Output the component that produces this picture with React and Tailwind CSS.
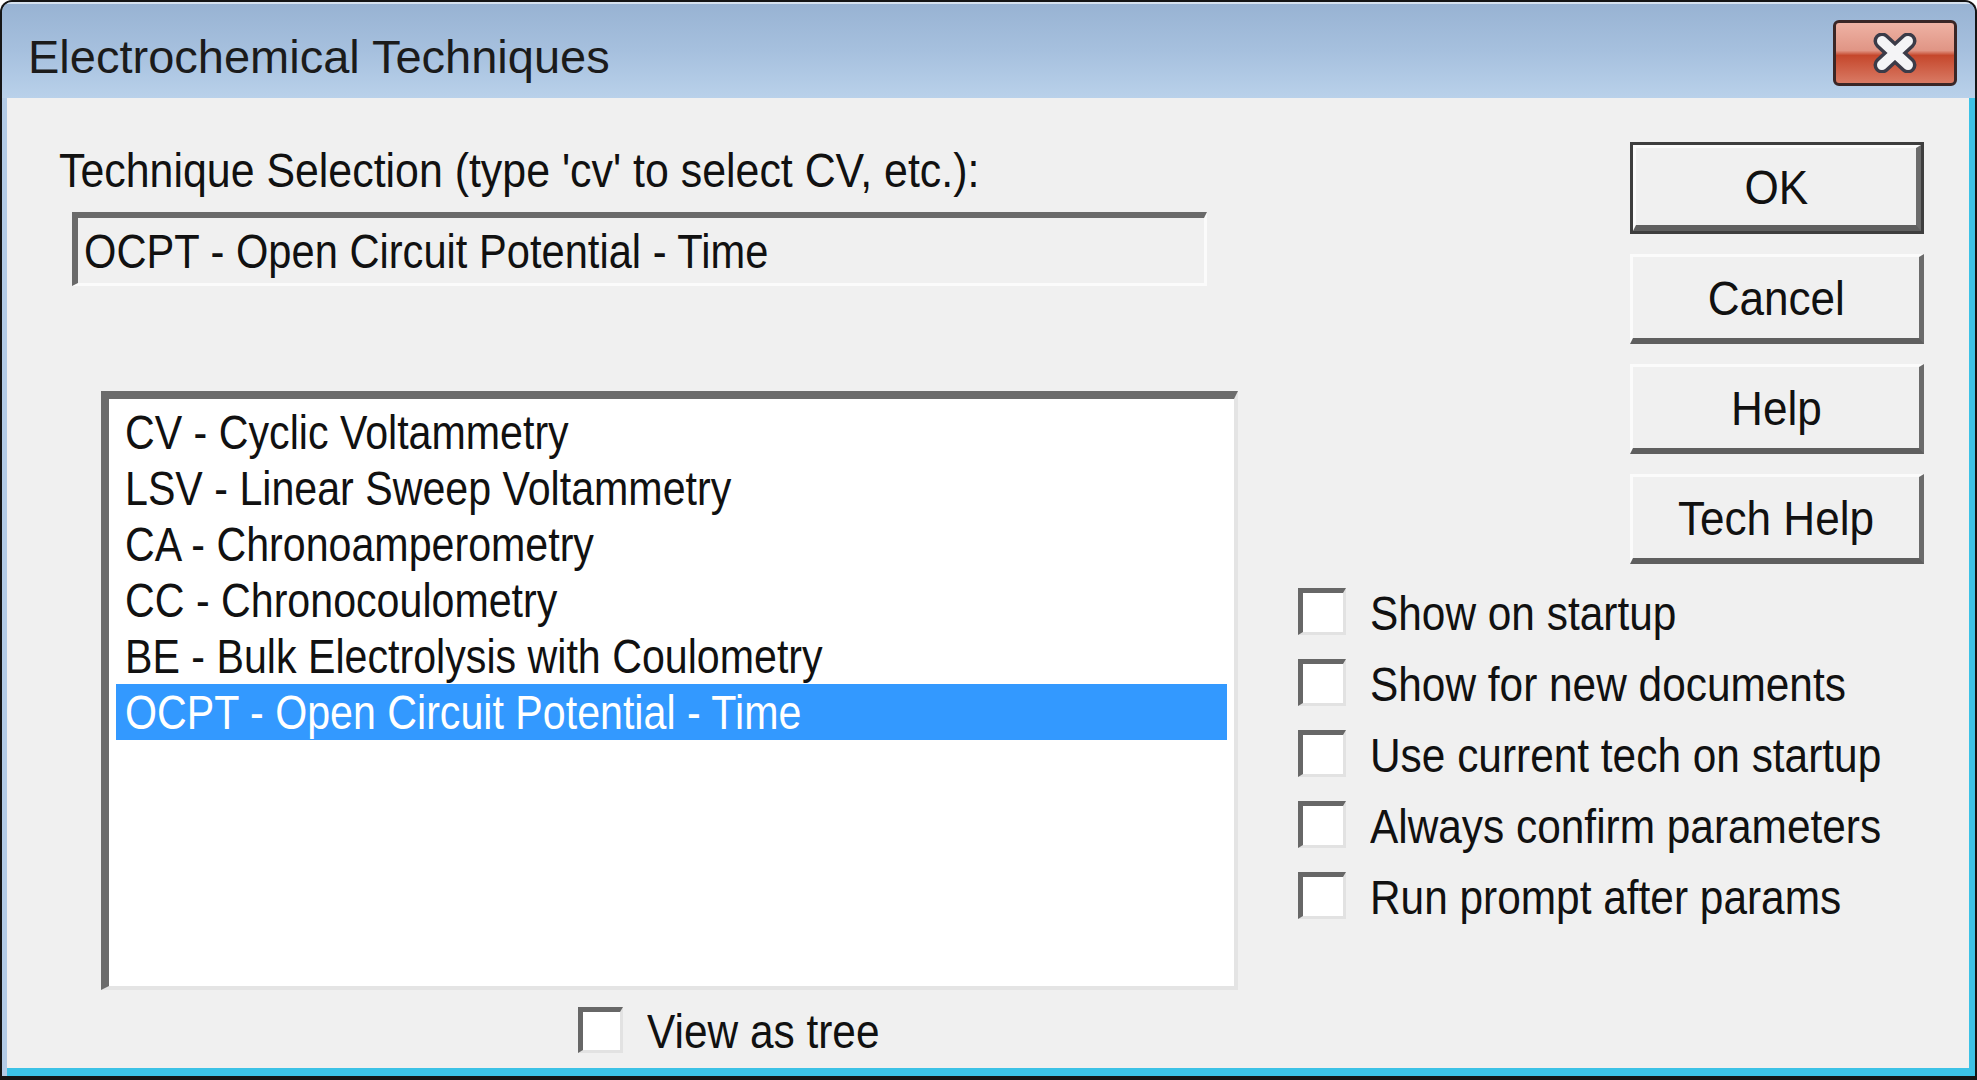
import React from 'react';

const techniques = [
  'CV - Cyclic Voltammetry',
  'LSV - Linear Sweep Voltammetry',
  'CA - Chronoamperometry',
  'CC - Chronocoulometry',
  'BE - Bulk Electrolysis with Coulometry',
  'OCPT - Open Circuit Potential - Time'
];

const options = [
  'Show on startup',
  'Show for new documents',
  'Use current tech on startup',
  'Always confirm parameters',
  'Run prompt after params'
];

const uiFont = "font-['Liberation_Sans',Arial,sans-serif]";

// the dialog font is a narrow bitmap face, so the text is squeezed sideways
function Narrow({ children, scale = 'scale-x-[0.85]', origin = 'origin-left' }) {
  return <span className={`inline-block whitespace-nowrap ${origin} ${scale}`}>{children}</span>;
}

function CheckBox({ label, size = 'h-[47px] w-[48px]' }) {
  return (
    <div className="flex h-[47px] items-center">
      <div
        className={`${size} shrink-0 border-t-[5px] border-l-[5px] border-r-[3px] border-b-[3px] border-t-[#676767] border-l-[#676767] border-r-[#e2e2e2] border-b-[#e2e2e2] bg-white`}
      />
      <span className="ml-[24px] mt-[4px] text-[49px] leading-[47px] text-[#111]">
        <Narrow scale="scale-x-[0.865]">{label}</Narrow>
      </span>
    </div>
  );
}

function Button({ label, isDefault }) {
  const face = (
    <div className="flex h-full w-full items-center justify-center border-t-[3px] border-l-[3px] border-r-[5px] border-b-[6px] border-t-[#fbfbfb] border-l-[#fbfbfb] border-r-[#6b6b6b] border-b-[#5f5f5f] bg-[#f0f0f0]">
      <span className="text-[49px] leading-[56px] text-[#111]">
        <Narrow scale="scale-x-[0.9]" origin="origin-center">{label}</Narrow>
      </span>
    </div>
  );
  if (isDefault) {
    return <div className="h-[92px] w-[294px] border-[3px] border-[#3e3e3e]">{face}</div>;
  }
  return <div className="h-[90px] w-[294px]">{face}</div>;
}

export default function App() {
  return (
    <div className={`h-[1080px] w-[1977px] overflow-hidden bg-white ${uiFont}`}>
      <div className="flex h-[1080px] w-[1977px] flex-col rounded-t-[12px] bg-[#151515] px-[2px] pt-[2px] pb-[4px]">
        <div className="flex flex-1 flex-col overflow-hidden rounded-t-[10px] bg-[#b3cbe6]">
          {/* title bar */}
          <div className="flex h-[96px] shrink-0 items-start justify-between border-t-[2px] border-t-[#d6e2ef] bg-[linear-gradient(180deg,#98b3d3_0%,#a6c0de_50%,#b9d1ea_100%)] pl-[26px] pr-[18px]">
            <span className="mt-[25px] text-[47px] leading-[56px] text-[#1b1b1b]">Electrochemical Techniques</span>
            <div className="mt-[16px] flex h-[66px] w-[124px] items-center justify-center rounded-[6px] border-[3px] border-[#3a2626] bg-[linear-gradient(180deg,#eeb2a4_0%,#e09585_46%,#c5472c_54%,#d97a64_100%)]">
              <svg width="50" height="40" viewBox="0 0 50 40">
                <path d="M12 8 L38 32 M38 8 L12 32" stroke="#3b3b48" strokeWidth="17" strokeLinecap="round" />
                <path d="M12 8 L38 32 M38 8 L12 32" stroke="#f4f4f6" strokeWidth="10" strokeLinecap="round" />
              </svg>
            </div>
          </div>

          {/* content */}
          <div className="ml-[5px] flex flex-1 border-r-[6px] border-b-[8px] border-r-[#3cc2e6] border-b-[#3cc2e6] bg-[#f0f0f0]">
            <div className="flex w-[1291px] shrink-0 flex-col pl-[52px] pt-[44px]">
              <div className="h-[56px] text-[49px] leading-[56px] text-[#111]">
                <Narrow scale="scale-x-[0.875]">Technique Selection (type 'cv' to select CV, etc.):</Narrow>
              </div>

              <div className="ml-[13px] mt-[14px] flex h-[74px] w-[1135px] items-center border-t-[6px] border-l-[6px] border-r-[3px] border-b-[3px] border-t-[#6a6a6a] border-l-[#6a6a6a] border-r-[#fbfbfb] border-b-[#fbfbfb] bg-[#f0f0f0] pl-[6px]">
                <span className="text-[49px] leading-[56px] text-[#111]">
                  <Narrow>OCPT - Open Circuit Potential - Time</Narrow>
                </span>
              </div>

              <div className="ml-[42px] mt-[105px] h-[599px] w-[1137px] border-t-[8px] border-l-[8px] border-r-[4px] border-b-[4px] border-t-[#6b6b6b] border-l-[#6b6b6b] border-r-[#e4e4e4] border-b-[#e4e4e4] bg-white px-[7px] pt-[5px]">
                {techniques.map((t, i) => (
                  <div
                    key={t}
                    className={`flex h-[56px] items-center pl-[9px] text-[49px] leading-[56px] ${
                      i === techniques.length - 1 ? 'bg-[#3399ff] text-white' : 'text-[#111]'
                    }`}
                  >
                    <Narrow scale="scale-x-[0.84]">{t}</Narrow>
                  </div>
                ))}
              </div>

              <div className="ml-[519px] mt-[16px]">
                <CheckBox label="View as tree" size="h-[46px] w-[45px]" />
              </div>
            </div>

            <div className="flex flex-col pt-[44px]">
              <div className="ml-[332px] flex flex-col gap-[20px]">
                <Button label="OK" isDefault />
                <Button label="Cancel" />
                <Button label="Help" />
                <Button label="Tech Help" />
              </div>
              <div className="mt-[24px] flex flex-col gap-[24px]">
                {options.map((o) => (
                  <CheckBox key={o} label={o} />
                ))}
              </div>
            </div>
          </div>
        </div>
      </div>
    </div>
  );
}
